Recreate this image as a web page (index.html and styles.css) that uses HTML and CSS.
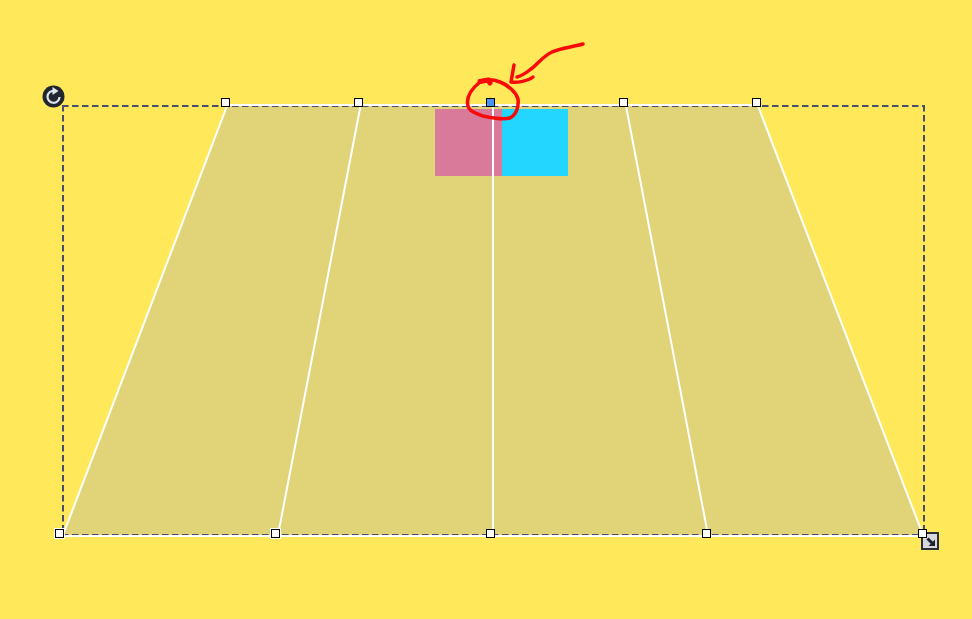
FILE: index.html
```html
<!DOCTYPE html>
<html lang="en">

<head>
    <meta charset="UTF-8">
    <meta name="viewport" content="width=device-width, initial-scale=1.0">
    <title>Perspective grid</title>
    <link rel="stylesheet" href="styles.css">
</head>

<body>
    <svg class="canvas" width="972" height="619" viewBox="0 0 972 619" role="img" aria-label="Perspective grid editor">
        <!-- shape -->
        <polygon class="floor" points="227,106 758,106 923,535 63,535"></polygon>
        <rect class="swatch-pink" x="435" y="109" width="67" height="67"></rect>
        <rect class="swatch-blue" x="502" y="109" width="66" height="67"></rect>

        <!-- selection box -->
        <path class="selection" d="M62 106H925"></path>
        <path class="selection" d="M62 535H925"></path>
        <path class="selection" d="M63 105V536"></path>
        <path class="selection" d="M924 105V536"></path>

        <!-- grid lines -->
        <path class="grid-edge" d="M227 105H758M63 536H923"></path>
        <path class="grid" d="M227 106L63 535M360.500 106L278 535M493 106V535M626 106L708 535M758 106L923 535"></path>

        <!-- rotate -->
        <circle class="rotate-bg" cx="53.500" cy="96.500" r="11"></circle>
        <path class="rotate-arc" d="M54 90.800A6 6 0 1 0 59.500 97"></path>
        <path class="rotate-tip" d="M52.500 87L58.500 91L52.500 95Z"></path>

        <!-- resize -->
        <rect class="resize-bg" x="922" y="533" width="16" height="16"></rect>
        <path class="resize-arrow" d="M927.500 538.500L933 544"></path>
        <path class="resize-tip" d="M935 539.500V546H928.500Z"></path>

        <!-- handles -->
        <rect class="handle" x="221.500" y="98.500" width="8" height="8"></rect>
        <rect class="handle" x="354.500" y="98.500" width="8" height="8"></rect>
        <rect class="handle handle-on" x="486.500" y="98.500" width="8" height="8"></rect>
        <rect class="handle" x="619.500" y="98.500" width="8" height="8"></rect>
        <rect class="handle" x="752.500" y="98.500" width="8" height="8"></rect>
        <rect class="handle-halo" x="54" y="528" width="11" height="11"></rect>
        <rect class="handle" x="55.500" y="529.500" width="8" height="8"></rect>
        <rect class="handle-halo" x="270" y="528" width="11" height="11"></rect>
        <rect class="handle" x="271.500" y="529.500" width="8" height="8"></rect>
        <rect class="handle" x="486.500" y="529.500" width="8" height="8"></rect>
        <rect class="handle" x="702.500" y="529.500" width="8" height="8"></rect>
        <rect class="handle" x="918.500" y="529.500" width="8" height="8"></rect>

        <!-- hand drawn note -->
        <path class="scribble" d="M480 82C486 79 492 79 500 82C508 85 516 92 518 99C519 107 516 115 510 118C503 120 492 118 483 116C475 113 469 111 468 106C466 98 470 90 480 82"></path>
        <path class="scribble-blob" d="M480 81.500L488 80L490 83"></path>
        <path class="scribble" d="M583 44C573 47 560 48 552 52C543 56 538 64 531 69C526 73 521 76 517 77"></path>
        <path class="scribble" d="M514 65L511 82C517 83 528 81 533 77"></path>
    </svg>
</body>

</html>
```

FILE: styles.css
```css
body {
    margin: 0;
    background-color: #ffe95a;
    overflow: hidden;
}

.canvas {
    display: block;
}

.floor {
    fill: #e1d478;
}

.swatch-pink {
    fill: #d97a9a;
}

.swatch-blue {
    fill: #22d6ff;
}

.grid {
    fill: none;
    stroke: white;
    stroke-width: 2;
}

.grid-edge {
    fill: none;
    stroke: white;
    stroke-width: 2;
}

.selection {
    fill: none;
    stroke: #484d6e;
    stroke-width: 2;
    stroke-dasharray: 6.500 3.500;
}

.handle {
    fill: white;
    stroke: black;
    stroke-width: 1;
}

.handle-on {
    fill: #4b93f2;
}

.handle-halo {
    fill: white;
}

.rotate-bg {
    fill: #22262f;
}

.rotate-arc {
    fill: none;
    stroke: #dfe6f2;
    stroke-width: 2.200;
}

.rotate-tip {
    fill: #dfe6f2;
}

.resize-bg {
    fill: #d8d8dc;
    stroke: #2a2f3a;
    stroke-width: 2;
}

.resize-arrow {
    fill: none;
    stroke: #1d2230;
    stroke-width: 3;
}

.resize-tip {
    fill: #1d2230;
}

.scribble {
    fill: none;
    stroke: #f80a0a;
    stroke-width: 3.500;
    stroke-linecap: round;
    stroke-linejoin: round;
}

.scribble-blob {
    fill: none;
    stroke: #f80a0a;
    stroke-width: 5;
    stroke-linecap: round;
}
```
